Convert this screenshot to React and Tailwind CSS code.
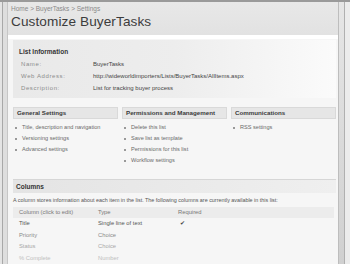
import React from "react";

const generalLinks = ["Title, description and navigation", "Versioning settings", "Advanced settings"];
const permLinks = ["Delete this list", "Save list as template", "Permissions for this list", "Workflow settings"];
const commLinks = ["RSS settings"];

const columns = [
  { name: "Title", type: "Single line of text", required: true, tone: "text-[#555]" },
  { name: "Priority", type: "Choice", required: false, tone: "text-[#8a8a8a]" },
  { name: "Status", type: "Choice", required: false, tone: "text-[#a8a8a8]" },
  { name: "% Complete", type: "Number", required: false, tone: "text-[#c0c0c0]" },
];

const App = () => {
  return (
    <div className="w-[350px] h-[264px] overflow-hidden flex bg-[#e2e2e2] font-['Liberation_Sans',Arial,sans-serif]">
      {/* left window frame */}
      <div className="w-[8px] shrink-0 flex border-t-2 border-[#9a9a9a]">
        <div className="w-[2px] bg-[#e4e4e4]" />
        <div className="w-[1px] bg-[#a8a8a8]" />
        <div className="flex-1 bg-[#dedede] border-r border-[#c6c6c6]" />
      </div>

      {/* page */}
      <div className="flex-1 flex flex-col border-t-2 border-[#9a9a9a] min-w-0">
        {/* title area */}
        <div className="h-[33px] shrink-0 bg-gradient-to-b from-[#e8e8e8] to-[#e2e2e2] pl-[3px] pt-[3px]">
          <div className="text-[6.5px] leading-[8px] text-[#8a8a8a]">Home &gt; BuyerTasks &gt; Settings</div>
          <div className="text-[13.6px] leading-[18px] text-[#3c3c3c] tracking-[0.1px]">Customize BuyerTasks</div>
        </div>
        <div className="h-[4px] shrink-0 bg-white" />

        {/* body */}
        <div className="flex-1 bg-[#f6f6f6] pl-[5px] pr-[2px] pt-[1px]">
          {/* list information */}
          <div className="h-[58px] bg-gradient-to-r from-[#e9e9e9] via-[#ededed] to-[#fbfbfb] pl-[6px] pt-[8px]">
            <div className="text-[6.5px] leading-[8px] font-bold text-[#333]">List Information</div>
            <div className="mt-[4px] flex flex-col gap-[4px] text-[6px] leading-[8px]">
              <div className="flex">
                <span className="w-[74px] pl-[2px] text-[#8c8c8c] tracking-[0.6px]">Name:</span>
                <span className="text-[#444]">BuyerTasks</span>
              </div>
              <div className="flex">
                <span className="w-[74px] pl-[2px] text-[#8c8c8c] tracking-[0.6px]">Web Address:</span>
                <span className="text-[#444]">http://wideworldimporters/Lists/BuyerTasks/AllItems.aspx</span>
              </div>
              <div className="flex">
                <span className="w-[74px] pl-[2px] text-[#8c8c8c] tracking-[0.6px]">Description:</span>
                <span className="text-[#444]">List for tracking buyer process</span>
              </div>
            </div>
          </div>

          {/* settings sections */}
          <div className="mt-[9px] grid grid-cols-3 gap-x-[4px]">
            <Section title="General Settings" links={generalLinks} />
            <Section title="Permissions and Management" links={permLinks} />
            <Section title="Communications" links={commLinks} />
          </div>

          {/* columns */}
          <div className="mt-[13px] h-[14px] bg-gradient-to-r from-[#e4e4e4] to-[#efefef] border-t border-[#d6d6d6] pl-[3px] flex items-center">
            <span className="text-[6.5px] font-bold text-[#333]">Columns</span>
          </div>
          <div className="mt-[3px] text-[5.4px] leading-[8px] text-[#555] whitespace-nowrap">
            A column stores information about each item in the list. The following columns are currently available in this list:
          </div>
          <div className="mt-[3px] mr-[2px] h-[11px] bg-[#ececec] flex items-center text-[5.8px] text-[#777]">
            <span className="w-[85px] pl-[6px]">Column (click to edit)</span>
            <span className="w-[80px]">Type</span>
            <span>Required</span>
          </div>
          {columns.map((c) => (
            <div key={c.name} className={`h-[11.5px] flex items-center text-[5.8px] ${c.tone}`}>
              <span className="w-[85px] pl-[6px]">{c.name}</span>
              <span className="w-[80px]">{c.type}</span>
              <span className="pl-[2px] text-[#444]">{c.required ? "✔" : ""}</span>
            </div>
          ))}
        </div>
      </div>

      {/* right scrollbar */}
      <div className="w-[12px] shrink-0 flex border-t-2 border-[#9a9a9a]">
        <div className="w-[1px] bg-[#bdbdbd]" />
        <div className="w-[5px] bg-gradient-to-b from-[#e6e6e6] to-[#d0d0d0]" />
        <div className="w-[1px] bg-[#b0b0b0]" />
        <div className="flex-1 bg-[#ececec]" />
      </div>
    </div>
  );
};

const Section = ({ title, links }) => (
  <div>
    <div className="h-[12px] bg-[#e6e6e6] border border-[#d9d9d9] pl-[3px] flex items-center">
      <span className="text-[6.2px] font-bold text-[#3a3a3a] whitespace-nowrap">{title}</span>
    </div>
    <ul className="mt-[3px] flex flex-col">
      {links.map((l) => (
        <li key={l} className="h-[11px] flex items-center pl-[2px] text-[5.6px] text-[#6a6a6a] whitespace-nowrap">
          <span className="w-[2px] h-[2px] bg-[#999] mr-[5px]" />
          {l}
        </li>
      ))}
    </ul>
  </div>
);

export default App;
